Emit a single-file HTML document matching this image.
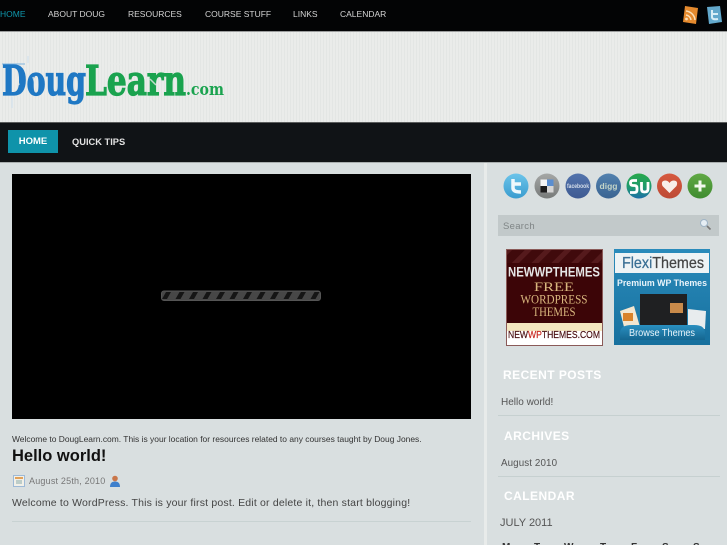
<!DOCTYPE html>
<html><head><meta charset="utf-8">
<style>
*{margin:0;padding:0;box-sizing:border-box}
html,body{width:727px;height:545px;overflow:hidden;background:#d9dfe0}
body{position:relative;font-family:"Liberation Sans",sans-serif}
.a{position:absolute;white-space:nowrap}
#top{left:0;top:0;width:727px;background:#030405;border-bottom:1px solid #9a9c9c;height:32px}
.tn{position:absolute;top:9px;font-size:8.500px;line-height:10px;color:#d4d4d4}
#hdr{left:0;top:32px;width:727px;height:90px;background:repeating-linear-gradient(90deg,#eaecea 0 2px,#e3e6e4 2px 3px)}
#nav{left:0;top:122px;width:727px;height:41px;background:#101316;border-top:1px solid #5a5c5c;border-bottom:1px solid #a9aeae}
.h{color:#fff;font-size:12px;font-weight:bold;letter-spacing:.45px;line-height:16px}
.m{color:#555;line-height:12px}
.d{top:542px;font-size:10px;font-weight:bold;color:#333;line-height:12px}
</style></head><body>
<div class="a" id="top">
<span class="tn" style="left:0;color:#0f97ad">HOME</span>
<span class="tn" style="left:48px">ABOUT DOUG</span>
<span class="tn" style="left:128px">RESOURCES</span>
<span class="tn" style="left:205px">COURSE STUFF</span>
<span class="tn" style="left:293px">LINKS</span>
<span class="tn" style="left:340px">CALENDAR</span>
<svg style="position:absolute;left:682px;top:5px" width="45" height="21" viewBox="0 0 45 21">
<path d="M3 1 L16 3 L14 19 L1 17Z" fill="#e58a2e"/>
<path d="M4 6 A10 10 0 0 1 13 15M4 10 A6 6 0 0 1 9 15" stroke="#fbe0b8" stroke-width="1.500" fill="none"/><circle cx="4.500" cy="14" r="1.400" fill="#fbe0b8"/>
<path d="M25 2 L38 1 L40 17 L27 19Z" fill="#63a9cc"/>
<path d="M30 5 V12 Q30 15 36 14 M30 9 H36" stroke="#d8eef6" stroke-width="2" fill="none"/>
</svg>
</div>
<div class="a" id="hdr">
<svg width="235" height="70" style="position:absolute;left:0;top:23px" viewBox="0 0 235 70">
<path d="M2 9 H25" stroke="#7fb4de" stroke-width="1"/>
<path d="M12 42 V53M28 1 V8" stroke="#cfe0ee" stroke-width="1"/>
<text x="2" y="40" font-family="DejaVu Serif" font-weight="bold" font-size="41" fill="#1f78c4" textLength="84" lengthAdjust="spacingAndGlyphs" stroke="#1f78c4" stroke-width="1.200">Doug</text>
<text x="85" y="40" font-family="DejaVu Serif" font-weight="bold" font-size="41" fill="#1aa34f" textLength="101" lengthAdjust="spacingAndGlyphs" stroke="#1aa34f" stroke-width="1.200">Learn</text>
<text x="186" y="40" font-family="DejaVu Serif" font-weight="bold" font-size="17" fill="#1aa34f" textLength="38" lengthAdjust="spacingAndGlyphs">.com</text>
<path d="M15 17 L19 30M33 22 L37 35M110 8 L122 10M150 24 L156 30" stroke="#e9ebe9" stroke-width="1.500" opacity=".8"/>
</svg>
</div>
<div class="a" id="nav">
<div class="a" style="left:8px;top:7px;width:50px;height:23px;background:#0f93aa;color:#fff;font-weight:bold;font-size:9.500px;line-height:24px;text-align:center">HOME</div>
<div class="a" style="left:72px;top:7px;color:#e2e2e2;font-weight:bold;font-size:9.300px;line-height:24px">QUICK TIPS</div>
</div>

<div class="a" style="left:12px;top:174px;width:459px;height:245px;background:#000"></div>
<svg class="a" style="left:161px;top:290px" width="160" height="11" viewBox="0 0 160 11">
<defs><pattern id="st" width="13.500" height="11" patternUnits="userSpaceOnUse"><rect width="13.500" height="11" fill="#474747"/><path d="M1 9 L5 2 H10 L6 9Z" fill="#151515"/></pattern></defs>
<rect x=".5" y="1" width="159" height="9.500" rx="2.500" fill="url(#st)" stroke="#555"/>
</svg>

<div class="a" style="left:12px;top:434px;font-size:8.450px;line-height:11px;color:#333">Welcome to DougLearn.com. This is your location for resources related to any courses taught by Doug Jones.</div>
<div class="a" style="left:12px;top:446px;font-size:16.500px;font-weight:bold;line-height:21px;color:#111">Hello world!</div>
<svg class="a" style="left:13px;top:475px" width="12" height="12" viewBox="0 0 12 12"><rect x=".5" y=".5" width="11" height="11" fill="#f2f0e8" stroke="#9db9d6"/><rect x="2" y="2" width="8" height="2" fill="#e2a25a"/><path d="M3 6h6M3 8h6" stroke="#8aa" stroke-width="1"/></svg>
<div class="a m" style="left:29px;top:475px;font-size:9px;color:#777;letter-spacing:.2px">August 25th, 2010</div>
<svg class="a" style="left:109px;top:475px" width="12" height="12" viewBox="0 0 12 12"><circle cx="6" cy="3.500" r="2.800" fill="#c9764a"/><path d="M1 12 Q1 6.500 6 6.500 Q11 6.500 11 12Z" fill="#3f80cc"/></svg>
<div class="a" style="left:12px;top:496px;font-size:10.500px;line-height:14px;color:#444;letter-spacing:.18px">Welcome to WordPress. This is your first post. Edit or delete it, then start blogging!</div>
<div class="a" style="left:12px;top:521px;width:459px;height:1px;background:#c8d2d2"></div>

<div class="a" style="left:484px;top:163px;width:3px;height:382px;background:#e8ebea"></div>

<svg class="a" style="left:502px;top:172px" width="212" height="28" viewBox="0 0 212 28">
<defs>
<linearGradient id="g1" x1="0" y1="0" x2="0" y2="1"><stop offset="0" stop-color="#6cc4ea"/><stop offset="1" stop-color="#3a9ccf"/></linearGradient>
<linearGradient id="g2" x1="0" y1="0" x2="0" y2="1"><stop offset="0" stop-color="#27a84a"/><stop offset=".55" stop-color="#1f9a70"/><stop offset="1" stop-color="#1d6fa8"/></linearGradient>
<linearGradient id="g3" x1="0" y1="0" x2="0" y2="1"><stop offset="0" stop-color="#a5a7a6"/><stop offset="1" stop-color="#777a79"/></linearGradient>
<linearGradient id="g4" x1="0" y1="0" x2="0" y2="1"><stop offset="0" stop-color="#5273ac"/><stop offset="1" stop-color="#3e5a92"/></linearGradient>
<linearGradient id="g5" x1="0" y1="0" x2="0" y2="1"><stop offset="0" stop-color="#5281ae"/><stop offset="1" stop-color="#3a6492"/></linearGradient>
<linearGradient id="g6" x1="0" y1="0" x2="0" y2="1"><stop offset="0" stop-color="#d65a40"/><stop offset="1" stop-color="#bd4a35"/></linearGradient>
<linearGradient id="g7" x1="0" y1="0" x2="0" y2="1"><stop offset="0" stop-color="#60a844"/><stop offset="1" stop-color="#3f8c30"/></linearGradient>
</defs>
<circle cx="14" cy="14" r="12.500" fill="url(#g1)"/>
<path d="M11 7 V16 Q11 20 19 20 M11 12 H19" stroke="#eef8fc" stroke-width="3.500" fill="none"/>
<circle cx="45" cy="14" r="12.500" fill="url(#g3)"/>
<rect x="38.500" y="7.500" width="6.500" height="6.500" fill="#f4f4f4"/><rect x="45" y="7.500" width="6.500" height="6.500" fill="#5a8ed0"/><rect x="38.500" y="14" width="6.500" height="6.500" fill="#1c1c1c"/><rect x="45" y="14" width="6.500" height="6.500" fill="#d5d5d5"/>
<circle cx="76" cy="14" r="12.500" fill="url(#g4)"/>
<text x="76" y="16" font-size="6" font-weight="bold" text-anchor="middle" fill="#d5deea" textLength="22" lengthAdjust="spacingAndGlyphs" font-family="Liberation Sans">facebook</text>
<circle cx="106.500" cy="14" r="12.500" fill="url(#g5)"/>
<text x="106.500" y="17" font-size="8.500" font-weight="bold" text-anchor="middle" fill="#c5d6c8" font-family="Liberation Sans">digg</text>
<circle cx="137" cy="14" r="12.500" fill="url(#g2)"/>
<path d="M135 8.500 H131 Q128.500 8.500 128.500 11 Q128.500 13.500 131 13.500 H132.500 Q135 13.500 135 16 V18 Q135 20.500 132.500 20.500 H128" stroke="#fff" stroke-width="2.800" fill="none"/>
<path d="M139.500 10 V17 Q139.500 20 142.500 20 Q146 20 146 17 V10" stroke="#fff" stroke-width="2.800" fill="none"/>
<circle cx="167.500" cy="14" r="12.500" fill="url(#g6)"/>
<path d="M167.500 21 L160.500 14 Q158.500 9 163 8.500 Q166 8.500 167.500 11 Q169 8.500 172 8.500 Q176.500 9 174.500 14Z" fill="#f8eeea"/>
<circle cx="198" cy="14" r="12.500" fill="url(#g7)"/>
<path d="M198 8.500 V19.500 M192.500 14 H203.500" stroke="#f2f8ee" stroke-width="3"/>
</svg>

<div class="a" style="left:498px;top:215px;width:221px;height:21px;background:#c2c9ca"></div>
<div class="a" style="left:503px;top:221px;font-size:9.500px;line-height:12px;color:#7f8586;letter-spacing:.3px">Search</div>
<svg class="a" style="left:699px;top:218px" width="13" height="13" viewBox="0 0 13 13"><circle cx="5" cy="5" r="3.500" fill="#e6eef4" stroke="#9fb4c6"/><path d="M8 8 L11.500 11.500" stroke="#777" stroke-width="1.600"/></svg>

<svg class="a" style="left:506px;top:249px" width="97" height="97" viewBox="0 0 97 97">
<defs><pattern id="dr" width="14" height="14" patternUnits="userSpaceOnUse" patternTransform="rotate(45)"><rect width="14" height="14" fill="#400a0c"/><rect width="5" height="14" fill="#551a1c"/></pattern></defs>
<rect width="96" height="74" fill="#3c0507"/>
<rect width="96" height="14" fill="url(#dr)"/>
<text x="48" y="27.500" font-size="14" font-weight="bold" text-anchor="middle" fill="#e6e6e6" textLength="92" lengthAdjust="spacingAndGlyphs" font-family="Liberation Sans">NEWWPTHEMES</text>
<g font-family="Liberation Serif" fill="#d9b77e" text-anchor="middle">
<text x="48" y="42" font-size="12.500" textLength="40" lengthAdjust="spacingAndGlyphs">FREE</text><text x="48" y="54.500" font-size="12.500" textLength="67" lengthAdjust="spacingAndGlyphs">WORDPRESS</text><text x="48" y="67" font-size="12.500" textLength="43" lengthAdjust="spacingAndGlyphs">THEMES</text></g>
<rect y="74" width="96" height="8" fill="#f4e6c0"/>
<rect y="82" width="96" height="14" fill="#fff"/>
<text x="48" y="89" font-size="10" text-anchor="middle" fill="#4a1012" textLength="92" lengthAdjust="spacingAndGlyphs" font-family="Liberation Sans" stroke="#4a1012" stroke-width=".2">NEW<tspan fill="#c8281e" stroke="#c8281e">WP</tspan>THEMES.COM</text>
<rect x=".5" y=".5" width="96" height="96" fill="none" stroke="#8a5a58"/>
</svg>

<svg class="a" style="left:614px;top:249px" width="96" height="97" viewBox="0 0 96 97">
<defs><linearGradient id="bb" x1="0" y1="0" x2="0" y2="1"><stop offset="0" stop-color="#2a8fc0"/><stop offset="1" stop-color="#156690"/></linearGradient>
<linearGradient id="fb" x1="0" y1="0" x2="0" y2="1"><stop offset="0" stop-color="#2a8bbb"/><stop offset="1" stop-color="#17709e"/></linearGradient></defs>
<rect width="96" height="96" fill="url(#fb)"/>
<rect x="1" y="4" width="94" height="20" fill="#eef3f5"/>
<text x="8" y="19" font-size="16" text-anchor="start" fill="#3a6f94" textLength="82" lengthAdjust="spacingAndGlyphs" font-family="Liberation Sans" stroke="#3a6f94" stroke-width=".25">Flexi<tspan fill="#444" stroke="#444">Themes</tspan></text>
<text x="48" y="37" font-size="9" font-weight="bold" text-anchor="middle" fill="#eaf4fa" textLength="90" lengthAdjust="spacingAndGlyphs" font-family="Liberation Sans">Premium WP Themes</text>
<path d="M6 62 L20 57 L26 78 H10Z" fill="#f2e6d0"/><path d="M74 60 L92 62 L91 80 H74Z" fill="#e8ecee"/>
<rect x="26" y="45" width="47" height="33" fill="#1f2022"/>
<rect x="56" y="54" width="13" height="10" fill="#c98a4a"/><rect x="9" y="64" width="10" height="8" fill="#d8822a"/>
<path d="M6 91 V84 Q6 76 18 76 H80 Q91 76 91 84 V91Z" fill="url(#bb)"/>
<text x="48" y="87" font-size="10" text-anchor="middle" fill="#e8f4fa" textLength="66" lengthAdjust="spacingAndGlyphs" font-family="Liberation Sans">Browse Themes</text>
</svg>

<div class="a h" style="left:503px;top:367px">RECENT POSTS</div>
<div class="a m" style="left:501px;top:397px;font-size:10px">Hello world!</div>
<div class="a" style="left:498px;top:415px;width:222px;height:1px;background:#c6d0d0"></div>
<div class="a h" style="left:504px;top:428px">ARCHIVES</div>
<div class="a m" style="left:501px;top:458px;font-size:9.800px;letter-spacing:.1px">August 2010</div>
<div class="a" style="left:498px;top:476px;width:222px;height:1px;background:#c6d0d0"></div>
<div class="a h" style="left:504px;top:488px">CALENDAR</div>
<div class="a m" style="left:500px;top:516px;font-size:11px;line-height:14px">JULY 2011</div>
<div class="a d" style="left:502px">M</div>
<div class="a d" style="left:534px">T</div>
<div class="a d" style="left:564px">W</div>
<div class="a d" style="left:600px">T</div>
<div class="a d" style="left:631px">F</div>
<div class="a d" style="left:662px">S</div>
<div class="a d" style="left:693px">S</div>
</body></html>
